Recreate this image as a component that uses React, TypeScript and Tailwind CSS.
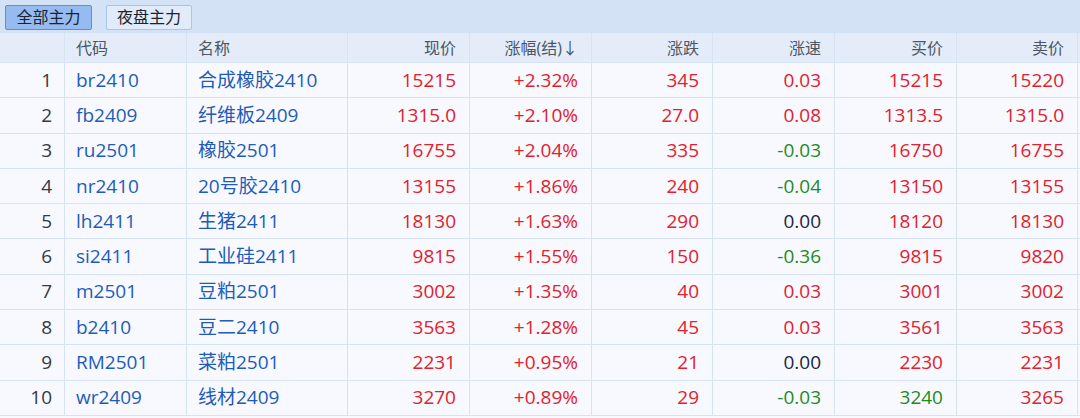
import React from 'react';

type Row = {
  code: string;
  name: string;
  price: string;
  pct: string;
  chg: string;
  speed: string;
  bid: string;
  ask: string;
};

const rows: Row[] = [
  { code: 'br2410', name: '合成橡胶2410', price: '15215', pct: '+2.32%', chg: '345', speed: '0.03', bid: '15215', ask: '15220' },
  { code: 'fb2409', name: '纤维板2409', price: '1315.0', pct: '+2.10%', chg: '27.0', speed: '0.08', bid: '1313.5', ask: '1315.0' },
  { code: 'ru2501', name: '橡胶2501', price: '16755', pct: '+2.04%', chg: '335', speed: '-0.03', bid: '16750', ask: '16755' },
  { code: 'nr2410', name: '20号胶2410', price: '13155', pct: '+1.86%', chg: '240', speed: '-0.04', bid: '13150', ask: '13155' },
  { code: 'lh2411', name: '生猪2411', price: '18130', pct: '+1.63%', chg: '290', speed: '0.00', bid: '18120', ask: '18130' },
  { code: 'si2411', name: '工业硅2411', price: '9815', pct: '+1.55%', chg: '150', speed: '-0.36', bid: '9815', ask: '9820' },
  { code: 'm2501', name: '豆粕2501', price: '3002', pct: '+1.35%', chg: '40', speed: '0.03', bid: '3001', ask: '3002' },
  { code: 'b2410', name: '豆二2410', price: '3563', pct: '+1.28%', chg: '45', speed: '0.03', bid: '3561', ask: '3563' },
  { code: 'RM2501', name: '菜粕2501', price: '2231', pct: '+0.95%', chg: '21', speed: '0.00', bid: '2230', ask: '2231' },
  { code: 'wr2409', name: '线材2409', price: '3270', pct: '+0.89%', chg: '29', speed: '-0.03', bid: '3240', ask: '3265' },
];

const grid = 'grid grid-cols-[65px_122px_161px_122px_122px_121px_122px_122px_121px]';

const red = 'text-[#e3202c]';
const green = 'text-[#1f8a1f]';
const flat = 'text-[#1b2540]';

const tone = (v: string) => {
  if (v.startsWith('-')) return green;
  if (parseFloat(v) === 0) return flat;
  return red;
};

const cell = 'border-r border-[#d6e3f4] flex items-center';

const App = () => {
  return (
    <div
      className="w-[1080px] h-[418px] overflow-hidden bg-[#f7f9fe]"
      style={{ fontFamily: '"Open Sans", "Noto Sans CJK SC", sans-serif' }}
    >
      <div className="h-[33px] bg-[#d3e2f4] flex items-center gap-[14px] px-[5px] pt-[1px]">
        <button className="h-[25px] w-[87px] rounded-[2px] border border-[#5a8fdb] bg-[#95bbf0] text-[16px] leading-none text-[#1c2230]">
          全部主力
        </button>
        <button className="h-[25px] w-[86px] rounded-[2px] border border-[#a7c5ef] bg-[#e1ebf9] text-[16px] leading-none text-[#1c2230]">
          夜盘主力
        </button>
      </div>

      <div className={`${grid} h-[30px] bg-[#e3ecf8] border-b border-[#d6e3f4] text-[16px] text-[#4b5566]`}>
        <div className={cell}></div>
        <div className={`${cell} pl-[11px]`}>代码</div>
        <div className={`${cell} pl-[11px]`}>名称</div>
        <div className={`${cell} justify-end pr-[13px]`}>现价</div>
        <div className={`${cell} justify-end pr-[13px]`}>涨幅(结)↓</div>
        <div className={`${cell} justify-end pr-[13px]`}>涨跌</div>
        <div className={`${cell} justify-end pr-[13px]`}>涨速</div>
        <div className={`${cell} justify-end pr-[13px]`}>买价</div>
        <div className={`${cell} justify-end pr-[13px]`}>卖价</div>
      </div>

      {rows.map((r, i) => (
        <div key={r.code} className={`${grid} h-[35.3px] border-b border-[#d6e3f4] text-[19px] leading-none`}>
          <div className={`${cell} justify-end pr-[12px] text-[#333a46]`}>{i + 1}</div>
          <div className={`${cell} pl-[11px] text-[#1e5cb9]`}>{r.code}</div>
          <div className={`${cell} pl-[11px] text-[#1e5cb9]`}>{r.name}</div>
          <div className={`${cell} justify-end pr-[13px] ${tone(r.pct)}`}>{r.price}</div>
          <div className={`${cell} justify-end pr-[13px] ${tone(r.pct)}`}>{r.pct}</div>
          <div className={`${cell} justify-end pr-[13px] ${tone(r.pct)}`}>{r.chg}</div>
          <div className={`${cell} justify-end pr-[13px] ${tone(r.speed)}`}>{r.speed}</div>
          <div className={`${cell} justify-end pr-[13px] ${r.code === 'wr2409' ? green : red}`}>{r.bid}</div>
          <div className={`${cell} justify-end pr-[13px] ${tone(r.pct)}`}>{r.ask}</div>
        </div>
      ))}
    </div>
  );
};

export default App;
